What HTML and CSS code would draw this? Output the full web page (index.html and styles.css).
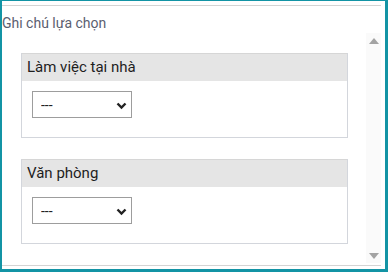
FILE: index.html
```html
<!DOCTYPE html>
<html lang="vi">
<head>
  <meta charset="UTF-8" />
  <title>Ghi chú lựa chọn</title>
  <link rel="stylesheet" href="styles.css">
</head>
<body>
  <div class="frame">
    <div class="rule"></div>
    <div class="title">Ghi chú lựa chọn</div>

    <div class="scroll">
      <div class="content">
        <div class="panel">
          <div class="panel-head">Làm việc tại nhà</div>
          <div class="panel-body">
            <div class="select">
              <select><option>---</option></select>
              <svg class="chev" width="11" height="8" viewBox="0 0 11 8"><path d="M1.5 1.5 L5.5 5.5 L9.5 1.5" fill="none" stroke="#222" stroke-width="2.4"/></svg>
            </div>
          </div>
        </div>

        <div class="panel">
          <div class="panel-head">Văn phòng</div>
          <div class="panel-body">
            <div class="select">
              <select><option>---</option></select>
              <svg class="chev" width="11" height="8" viewBox="0 0 11 8"><path d="M1.5 1.5 L5.5 5.5 L9.5 1.5" fill="none" stroke="#222" stroke-width="2.4"/></svg>
            </div>
          </div>
        </div>
      </div>

      <div class="scrollbar">
        <span class="arrow up"></span>
        <span class="arrow down"></span>
      </div>
    </div>

    <div class="rule bottom"></div>
  </div>
</body>
</html>
```

FILE: styles.css
```css
* { box-sizing: border-box; margin: 0; padding: 0; }
body { font-family: Roboto, 'Liberation Sans', sans-serif; background: #fff; }

/* Outer teal frame */
.frame {
  width: 388px; height: 272px;
  border-style: solid; border-color: #1394a5;
  border-width: 1px 3px 3px 2px;
  display: flex; flex-direction: column;
  padding-top: 4px;
}

.rule { height: 1px; background: #d4d4d4; margin-right: 4px; }
.rule.bottom { margin-top: 2px; }

.title {
  font-size: 14px; line-height: 16px;
  color: #5b6070;
  margin-top: 9px;
}

/* Scroll area with content + fake scrollbar */
.scroll { display: flex; height: 230px; margin-top: 2px; margin-right: 4px; }
.content { flex: 1; padding: 20px 18px 0 19px; display: flex; flex-direction: column; gap: 21px; overflow: hidden; }

.panel { border: 1px solid #d3d6dc; border-top: 0; }
.panel-head {
  background: #e5e5e5;
  border-top: 1px solid #d6d6d6;
  height: 28px;
  padding: 4px 5px 0;
  font-size: 15px; line-height: 18px;
  color: #1e1e1e;
}
.panel-body { padding: 10px 10px 20px; height: 56px; }

.select { position: relative; width: 100px; height: 27px; }
.select select {
  appearance: none; -webkit-appearance: none;
  width: 100%; height: 100%;
  border: 1px solid #9d9d9d; border-radius: 0;
  background: #fff;
  font-family: inherit; font-size: 14px; color: #222;
  padding: 0 8px;
}
.chev { position: absolute; right: 5px; top: 11px; pointer-events: none; }

.scrollbar {
  width: 15px; background: #fafafa;
  display: flex; flex-direction: column; justify-content: space-between; align-items: center;
  padding: 5px 0 4px;
}
.arrow { width: 0; height: 0; border-left: 5px solid transparent; border-right: 5px solid transparent; }
.arrow.up { border-bottom: 6px solid #a3a3a3; }
.arrow.down { border-top: 6px solid #a3a3a3; }
```
